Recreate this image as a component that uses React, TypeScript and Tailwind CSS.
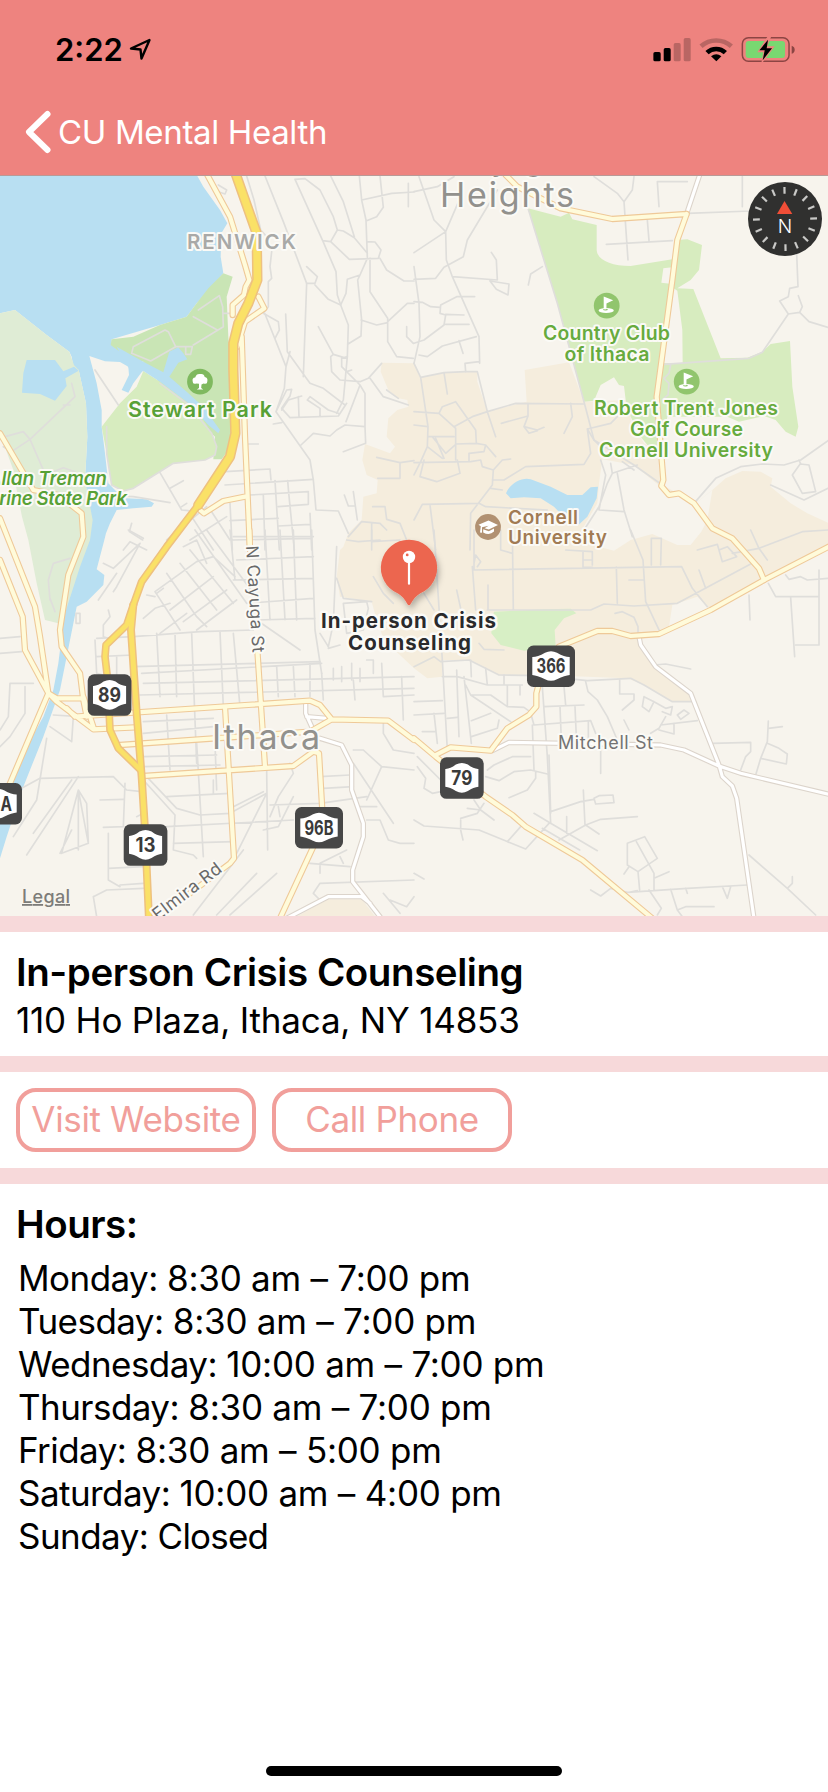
import React from "react";

type Tile = "nw" | "ne" | "sw" | "se";

const TILE_ORIGIN: Record<Tile, string> = {
  nw: "translate(0 170) scale(.33333)",
  ne: "translate(414 170) scale(.33333)",
  sw: "translate(0 530) scale(.33333)",
  se: "translate(414 530) scale(.33333)",
};

const LAND = "#f7f4ed";
const WATER = "#b8dff2";
const CAMPUS = "#f5eddd";
const GOLF = "#d7ecbf";
const PARK = "#c9e5b5";

const areas: [Tile, string, string][] = [
  ["nw", WATER, "M0 0H582L610 50 660 120 682 160 664 190 662 260 670 310 590 400 560 440 480 465 335 508 335 525 380 560 430 600 400 640 385 668 365 660 387 615 385 590 360 576 315 574 268 558 290 640 305 720 305 770 315 850 325 940 350 965 380 985 440 988 462 1000 455 1010 400 1015 350 1020 330 1060 318 1090 313 1110 290 1198 313 1215 310 1245 260 1295 230 1310 200 1460 180 1560 130 1700 70 1850 20 2000 0 2065V1930L30 1820 130 1640 160 1560 175 1480 195 1320 240 1160 262 1120 275 1050 265 1000 255 930 262 800 258 700 236 600 220 590 215 560 208 545 140 495 45 420 0 430Z"],
  ["nw", "#dfecd5", "M0 430L45 420 140 495 208 545 222 585 236 600 258 700 262 800 255 930 278 1050 270 1110 240 1190 195 1330 175 1360 135 1350 110 1240 85 1110 66 1040 50 960 40 900 0 790Z"],
  ["nw", WATER, "M80 570H165L190 604 222 590 236 602 196 625 200 648 165 692 120 672 66 668 70 610Z"],
  ["nw", PARK, "M670 310L698 320 680 380 685 500 690 560 700 820 665 868 640 868 645 800 480 640 430 575 380 560 332 525 335 508 400 500 480 465 560 440 590 400 625 355Z"],
  ["nw", GOLF, "M430 603L480 635 560 695 610 750 635 790 650 830 645 855 615 870 520 880 400 955 370 963 335 945 320 850 305 770 360 700 410 650Z"],
  ["nw", WATER, "M350 530L430 575 490 607 508 545 535 532 550 550 562 568 535 578 508 620 560 665 610 710 660 780 655 790 625 765 560 695 480 635 430 603 400 615 365 560Z"],
  ["ne", CAMPUS, "M0 580L20 622 90 608 190 605 190 635 220 725 310 702 338 695 332 600 465 577 510 695 635 690 655 760 690 820 735 850 745 945 845 1000 895 960 935 925 985 903 1040 905 1075 925 1070 950 1130 1000 1180 1030 1242 1058V1130L1050 1230 890 1320 850 1280 775 1305 765 1370 735 1390 675 1410 725 1490 830 1570 845 1592 775 1595 690 1545 640 1525 380 1515 255 1515 165 1470 85 1470 85 1520 40 1525 0 1495-90 1410-112 1350-127 1295-222 1280-232 1220-222 1140-212 1130-197 1090-157 1050-152 980-112 970-109 930-142 915-155 870-147 822-72 850-57 830-82 800-77 745-50 720-17 710-20 690-47 685-77 660-100 605-97 578Z"],
  ["ne", LAND, "M565 868L660 885 740 950 845 1000 895 960 880 1050 862 1085 830 1125 790 1125 715 1092 650 1110 600 1142 555 1130 500 1085 550 1000 555 940Z"],
  ["sw", LAND, "M1025 205L1110 212 1130 290 1110 320 1030 310Z"],
  ["sw", CAMPUS, "M880 1165L985 1108 1085 1108 1130 1165Z"],
  ["se", "#d7efc5", "M240 245L390 238 470 236 487 250 450 265 422 300 425 350 330 362 260 345 232 310 235 270Z"],
  ["ne", WATER, "M276 970C290 935 330 920 350 928L410 950 460 975 505 975 530 952 552 950 548 985 520 1040 490 1068 450 1042 420 1010 380 985 330 982 290 985Z"],
  ["ne", GOLF, "M342 115L440 140 465 128 475 148 548 165V240C550 270 590 288 650 288L775 268 790 210 820 208 864 225 855 300 830 330 790 355 838 357 920 565 1000 563 1045 545 1070 522 1128 513 1135 650 1153 770 1145 800 1115 785 1085 750 1050 738 975 755 940 740 760 740 740 850 700 825 680 800 650 740 635 690 630 648 615 645 600 622 560 645 540 692 510 695 430 400Z"],
  ["ne", LAND, "M748 295L775 292 775 342 742 338ZM790 362L805 480 806 580 750 580 772 350Z"],
];

const streets: [Tile, string][] = [
  ["nw", "M740 18L762 90 782 180 800 200M815 245L810 290 815 325 805 335 805 410 790 430M790 430L835 455 838 480 825 505M795 18L850 155 920 340M885 28L915 26 960 60 1000 140 1012 180M885 28L968 212 1008 305 1012 375 1022 405M992 18L1030 95 1063 200M1078 18L1085 90 1098 150 1102 262M1085 90L1175 70 1242 66M1140 18L1150 112 1130 140 1098 153M1102 215L1125 216 1143 240 1135 265 1048 268 992 215 968 212M992 215L1012 180 1030 183 1063 203 1102 250M1140 265L1160 300 1212 333H1242M1102 265L1080 315 1042 328 1038 370 1022 405 1045 465 1042 560 1030 690 1010 730M1080 315L1073 330 1085 450 1083 498 1043 523M1110 265V365L1163 445V515L1190 560 1240 565M1242 400L1222 400 1163 455M1083 450L1130 465 1163 458"],
  ["nw", "M920 340L910 620M920 340H945L952 320 920 290M945 345L985 388 1022 405M857 432L862 545 910 612 930 640 970 655 1035 705M795 432L858 590 853 655 828 725M870 545L858 590M955 470L1000 553 992 560 995 605 1020 630 1080 635 1105 625 1145 580M1000 553L1040 565M1042 560L1025 565 1025 590 1040 605 1055 600M1080 645L1040 605M1080 645L1095 670V770L1035 765 1010 780 990 798 940 790 903 825M1080 645L1038 755M1095 770L1097 820 1030 845M828 725L930 870 940 930 948 1020 1015 1023 1045 1090M828 725L860 660 875 658 870 678 845 715 870 743 1015 738 1040 700M895 680L897 740M845 720L865 690 905 678M922 690L930 680 985 720 1015 730M922 690L960 715V740M820 762L845 758M738 822H775M1110 625L1150 680 1225 705M1160 660L1195 685M1225 40V110M1130 862L1200 878 1242 872M1200 878V925H1133M1220 470V500L1240 520"],
  ["nw", "M675 905L810 897 813 930M675 945L940 928M750 975L925 965M825 932L838 1140M863 932L866 968 883 1140M690 1052L785 1047 835 1045M790 975L795 1140M835 1010L925 1003V968M835 1068L930 1063M930 1030L935 1140M690 1000L697 1140M698 1110L935 1105M480 908L545 1020 565 1022M510 955L550 932M630 1018L690 1110M575 1040L640 1140M545 1010L560 1000M500 1110L620 1010M570 1110L680 1040M395 1060L388 1085 428 1110M350 978L400 980 510 998M370 1140L390 1115 440 1140M1033 975L1045 1008H1065M1060 965L1072 1050M1045 1100L1085 1055 1140 1060 1160 1080M1118 1010H1155L1160 1048 1200 1060 1220 1110M1115 1140V1060"],
  ["nw", "M595 420L658 377 668 410 670 470 580 525M580 440L652 480M670 430H690M400 530L495 480 505 485 527 530 452 573 395 550ZM527 530H577L572 553H557V530M285 600L355 705M320 770V850L335 945 370 963 400 955 520 880 615 870 645 855 650 830 635 790 560 700 480 640M215 640L225 680 90 808 130 900M90 808L35 845 10 830M15 800L70 785 90 808M190 705H210M160 905L190 893 225 905M655 45L680 60 675 72 655 65"],
  ["ne", "M15 20L60 150 95 185 140 80M0 65L70 50 120 20M0 248L95 185 97 270 115 320 195 500 197 580M0 290L15 400 18 500 0 580M0 328L65 325 90 292 148 260 160 210 250 60M115 320L250 330M232 247L247 270 250 330M228 333L285 342 282 375 247 358ZM385 290L350 312 343 345M182 380L128 380 80 405 78 430 95 435 90 465 30 510 0 520M0 395L25 397 50 410 78 412M95 433L150 435M95 463H165M15 555L40 560 85 528 187 500M135 512L147 550M195 575L153 580 155 605M342 115L430 400 510 695 540 810 560 830"],
  ["ne", "M540 20L610 70 630 95M660 20L655 60 630 95 642 270M735 110L730 35H820M700 150L705 212M577 223L775 212M820 130L1010 123M985 20V110M1010 123L1100 112M1148 250L1152 350 1127 355 1123 380 1097 393 1123 432 1157 427 1165 410 1153 377M1157 427L1185 455 1242 472M1123 432L1045 547 1005 565 750 583M770 585L765 610 750 625 765 640 762 675 745 690M840 1000L905 925 980 890 1045 882 1110 885 1160 870 1242 812M1155 870L1160 882 1185 885 1205 965 1165 970 1135 915 1160 880M1070 945L1170 990 1242 955M1100 112L1148 115 1150 250"],
  ["ne", "M0 580L20 622 90 608 155 605 190 605 220 725 245 800M220 725L305 700 510 702M20 622L42 770 40 830 20 875 0 915M42 770L0 765M90 608L100 672M0 725L75 730 85 710 125 695 185 780 187 820 215 825 245 860M75 730L125 775 125 870M120 770L175 740 220 725M42 800H120M40 830L85 865M55 800L95 850 127 822 187 820M65 805L90 865M0 878L170 875 200 870 205 890 238 900 235 945 170 1030 168 1140M30 870L18 920 68 935 138 910 130 870M165 875V850L210 845 215 825M238 900L265 870 290 867M262 760L342 738V700M342 738L330 770 370 780 390 772M330 770L345 790 370 782M470 700L475 740 450 790M610 740L590 760 520 777 530 850 510 883 335 890 270 930 235 930M0 1050L25 1003 195 1000 215 1010 400 1020M48 1005L65 1140M230 955L265 960M520 777L540 810 660 885 745 945M560 870L575 915 555 1020 630 1025M590 880L595 910 580 940 555 1010 510 1080M595 910L670 885M610 910L630 1020 655 1100M625 875L660 900"],
  ["se", "M180 0V120M175 110L185 240M260 0V60L295 70M295 0L298 240M180 120L803 110 835 175 880 230M455 60L535 65V105M507 65V112H535M507 90H535M650 0L687 90 695 215 740 310M645 150H690M607 112L610 220M220 240H530L570 222 660 228 790 220 1010 102M712 105V25H742L740 105M603 250L625 245 660 262 672 290V320M0 410L60 380 80 395 165 390 255 435 375 437 520 452 650 445 690 465 775 515 845 515M128 180L140 235M222 240V165M195 340L210 358 270 360M60 0L85 390M850 60L910 43 925 95 968 80 940 50 915 60M955 70L1035 55 1165 5 1242 0M1035 55L1010 0M1035 55L1060 90M855 120L875 175M30 190L60 240M180 100L185 75 200 95 190 110"],
  ["se", "M85 390L100 660M85 440L130 440 220 465 325 465M128 420L135 620M215 415L220 465M170 390L172 440M150 440L172 640M155 465L170 495 290 575M170 495H230L280 530 330 532 355 550M280 465V530M318 465V495M0 515L85 512M0 555L90 550M60 550L70 640M25 605H65M100 565L130 562M172 572L230 550M172 620L250 595 255 570M385 470L400 680 410 880M450 470L455 525M390 530L510 525M438 530L442 630M483 530L487 620M350 550L360 585 530 572 545 610M523 575V635M515 455L522 485 550 510 580 560 610 630M355 585L360 720M617 450V492H660V510L625 540M630 570L645 600M690 500L720 515 705 545 685 530 690 500M720 515L755 535 775 530 770 555 745 545M790 555L810 540 825 550 800 568ZM755 560L735 595 710 610M740 585L850 572M735 600L780 612 780 580M270 435V465"],
  ["se", "M10 680L80 750M10 710L35 745 30 775 55 790 80 785M215 740L255 752 300 725 350 720 400 732M220 720L240 705 295 680H350M365 725L365 745 340 780 285 803M405 675L410 850M410 845L500 815 540 808M508 780L513 885M540 805L555 797 597 795 600 818 545 822ZM360 850L410 880 550 962M385 895L497 960M435 930L515 885 560 868 670 860M458 860V910M515 885L555 912M405 880L335 957 195 900 30 888 0 870M335 957L280 935 320 890M140 870V900L147 930M140 865L190 850 210 820M160 835L200 840 240 870M180 810L200 840M560 655V730M640 940L692 920 730 985 672 1025 640 1005ZM667 935L720 1030V1080M720 1045L765 1025M672 1025L677 1080M645 1010L630 1032M530 1080L560 1098 590 1075 640 1087 820 1075 1000 1065M705 1080L742 1135 730 1155M770 1078L790 1140 815 1130H900M790 1140L805 1160M925 1070L940 1105 950 1070M1005 975L1120 1075 1205 1155M1120 1075L1135 1060V1040M0 1030L30 1047M815 1075L820 1090M645 1087L670 1082"],
  ["se", "M1063 160L1085 200H1215M1130 203L1142 380M1215 120L1215 345H1145M1005 195L1008 270M1115 135L1125 148 1160 140 1180 150 1242 145M720 405L755 402 830 417M895 640L1010 637V665L995 680 980 720M1063 573L1060 635 1040 685 1025 735M1063 595L1105 590M1060 640L1095 655 1120 672 1117 702 1040 685"],
  ["sw", "M550 50L590 30 620 100M465 185L590 95 640 80 705 140M465 185L540 300M500 130L590 260 620 290M540 100L650 240M570 60L700 220M585 0L740 220M620 0L760 190M470 190L490 175M510 240L640 140M550 275L680 180M590 300L710 210M480 310L560 250M430 265L465 235 510 220M440 195L465 200M690 0L705 150M700 20L940 20M710 90L940 80M700 150L940 145M795 0L810 270M840 0L855 270M880 0L890 270M935 0L945 300 965 430M740 220L940 205M770 270L945 265M770 270L900 360M310 100L340 115 420 40M385 0L430 25M420 40L350 170 340 185M295 210L350 130M325 240L330 260 310 285V320L325 325"],
  ["sw", "M290 325L400 320 600 305 760 300M290 380L400 375M400 410L770 400 960 395M470 310L480 500M525 310L530 500M575 310L590 700M660 305L670 530M425 430L965 400M430 460L1242 440M420 495L1242 475M350 380V440M700 310L720 530M830 410L835 500M880 410L885 500M930 400V500M285 330L290 430 325 440M0 325L60 320M0 370L65 365M30 460H100M30 460L25 560 0 600M75 470V550L30 620 0 650M140 625L110 810 40 920M160 555L240 560M150 590L215 635 220 560M500 555L510 720M430 575L640 565M430 680L650 675M430 710L660 705M590 640L610 980M645 640L650 780M430 610L640 590"],
  ["sw", "M0 810L120 745 340 740 380 780 425 785M235 740L80 975M215 750L100 910M235 780L185 970 265 940 235 780 260 820 265 940M235 780V960M180 970L215 900M300 810L370 808M375 760L370 890 310 892M325 910V1050L360 1070M325 1015L430 1010M360 1065L430 1060M280 1100L320 1080 430 1075M280 1100L290 1160M430 750L525 855 520 960 580 975 590 985M440 740L530 835 600 855 690 850 800 790M500 890L880 870M520 940L700 935M500 800L690 790M430 850L410 860M640 790V750M700 830L790 785M705 980L800 790M800 720L803 960M790 900L835 890 880 800M580 1155L730 960M650 1155L770 1030M690 1155L830 1030M835 830L840 860M810 825L960 820 1100 800M870 700L880 730 835 800 810 860M960 740L1050 735M970 775L1060 770M1080 830L1130 830M1100 870H1140L1165 930 1200 940 1242 940M1040 960L960 1000 960 1030M1020 980L1030 1000M930 1000L1050 1010M940 1090L960 1060 1242 1050M940 1090L960 1110M1060 660H1090L1145 710 1242 720M1060 700L1180 880M1145 710L1100 810M1150 1090L1200 1150M1170 1110L1220 1130 1242 1100M960 310L985 350M985 355L1020 345M1000 415V450M1025 410V455M1055 400V450M1080 415V455M965 430L970 510M1100 390H1120V430M1145 400L1150 500 1242 495M1150 570V610L1180 660 1242 670M1205 440L1210 570M1060 450L1065 510"],
  ["sw", "M1040 30L1075 35 1140 30M1115 0V35L1200 30M1010 145L1030 205 1115 215M1030 220L1100 215 1105 235 1090 300 1040 310 1030 220M1120 140L1150 190 1180 220M1010 50L1000 280 985 350M150 210L145 150 160 100 210 85M150 205L165 245M228 250H240V280H228Z"],
];

const whiteRoads: [Tile, string][] = [
  ["ne", "M862 0L820 125"],
  ["se", "M675 320L680 345 725 410 830 490 915 705 925 740 955 768 968 805 1020 1165M235 662L285 637 740 645 810 660 915 708 980 730 1245 793"],
  ["sw", "M917 520V550L935 590M920 560L980 565M960 625L1025 645 1055 705V780L1090 880V920L1058 1020V1055L1140 1160M860 1165L985 1100H1085L1110 1120"],
];

const paleRoads: [Tile, string][] = [
  ["nw", "M622 15L690 140 735 285 748 330 737 350 732 375 698 405V435M775 380L793 415 735 455 712 530M725 500L735 800 750 1140M600 1020L612 1030 670 993 735 980M0 790L100 960 175 975 245 1030 250 1100 205 1215 180 1380 185 1430 240 1510 250 1590 260 1640M0 1045L105 1310 120 1400 145 1570M0 1170L68 1340 75 1440 145 1570"],
  ["ne", "M275 15L310 50 440 115 595 147 818 132M818 132L790 210 775 330 728 680 748 930 742 948 765 975 795 970 840 1000 895 1075 955 1105 1035 1195 1050 1230"],
  ["se", "M1250 47L1050 150 890 240 735 312 650 318 595 303H550L435 350M375 460L367 490V530L345 555 280 595 230 662 110 652 65 675M0 625L65 680 215 800 295 855 335 890 505 990 715 1165"],
  ["sw", "M145 490L170 505H250M145 490L30 760M145 490L170 515 280 598 405 592M200 535L225 560 400 548 930 512 960 525 995 568 1165 572 1242 630M995 568L930 605 360 645M430 738L880 708 940 665 957 670 968 860 940 950 840 1165M748 0L750 60M772 360L795 710M675 530L702 985 690 1000 470 1165M250 500L270 560 280 590"],
];

const highways: [Tile, string, number][] = [
  ["nw", "M703 0L770 190 772 330 745 400 715 460 700 520 700 600 706 790 690 860 595 1005", 22],
  ["nw", "M595 1005L500 1130 425 1235 400 1305", 14],
  ["sw", "M400 225L393 300 410 550 425 740 435 900 447 1170", 15],
  ["sw", "M400 225L380 285 318 345 315 380 322 440 330 600 355 655 422 720", 14],
];

interface LabelProps {
  x: number;
  y: number;
  w?: number;
  size: number;
  fill: string;
  weight?: number;
  italic?: boolean;
  halo?: number;
  rotate?: number;
  children: string;
}

function Label({ x, y, w, size, fill, weight = 600, italic, halo = 4, rotate, children }: LabelProps) {
  return (
    <text
      x={x}
      y={y}
      textLength={w}
      fontSize={size}
      fontWeight={weight}
      fontStyle={italic ? "italic" : undefined}
      fill={fill}
      stroke="#fbfaf6"
      strokeWidth={halo}
      strokeLinejoin="round"
      paintOrder="stroke"
      transform={rotate ? `rotate(${rotate} ${x} ${y})` : undefined}
    >
      {children}
    </text>
  );
}

function Shield({ x, y, w = 43.7, tw, children }: { x: number; y: number; w?: number; tw: number; children: string }) {
  const r = w - 5.3;
  const c = w / 2;
  return (
    <g transform={`translate(${x} ${y})`}>
      <rect width={w} height="41.5" rx="6.5" fill="#474747" />
      <path
        d={`M5.3 11.6Q10 11.8 ${c - 6} 7.3Q${c} 4.2 ${c + 6} 7.3Q${r - 4.7} 11.8 ${r} 11.6V29.5Q${r - 4.7} 30 ${c + 6} 33.7Q${c} 37 ${c - 6} 33.7Q10 30 5.3 29.5Z`}
        fill="#fff"
      />
      <text x={c - tw / 2} y="27.8" fontSize="19.5" fontWeight="700" fill="#3a3a3a" textLength={tw} lengthAdjust="spacingAndGlyphs">
        {children}
      </text>
    </g>
  );
}

function GolfIcon({ x, y }: { x: number; y: number }) {
  return (
    <g transform={`translate(${x} ${y})`}>
      <circle r="12.9" fill="#91c56d" />
      <ellipse cx="-.5" cy="4.8" rx="7.6" ry="2.5" fill="#fff" />
      <path d="M-3-9.3L6.5-5.5-.3-2.2V3.2H-3Z" fill="#fff" />
      <ellipse cx="-1.2" cy="3.9" rx="2.4" ry=".9" fill="#91c56d" />
      <path d="M-2.6-6V3.7H-.6V-6Z" fill="#fff" />
    </g>
  );
}

function Compass() {
  return (
    <g transform="translate(785 219)">
      <circle r="37" fill="#30302f" />
      {Array.from({ length: 16 }, (_, i) => (
        <path key={i} d="M0-32V-25.2" stroke="#c9c9c7" strokeWidth="2.2" transform={`rotate(${i * 22.5 - 1})`} />
      ))}
      <path d="M-.5-18L7.3-5H-8Z" fill="#f04e37" />
      <text x="0" y="14" textAnchor="middle" fontSize="19" fontWeight="300" fill="#fff">
        N
      </text>
    </g>
  );
}

function CityMap() {
  const thin = { fill: "none", strokeLinejoin: "round" as const, strokeLinecap: "round" as const };
  return (
    <svg viewBox="0 176 828 740" className="block h-[740px] w-[828px] font-['Inter',sans-serif]">
      <defs>
        <filter id="pinShadow" x="-50%" y="-50%" width="200%" height="200%">
          <feDropShadow dx="2" dy="4" stdDeviation="3" floodOpacity=".28" />
        </filter>
      </defs>
      <rect y="176" width="828" height="740" fill={LAND} />
      {areas.map(([t, fill, d], i) => (
        <path key={i} transform={TILE_ORIGIN[t]} d={d} fill={fill} />
      ))}
      {streets.map(([t, d], i) => (
        <path key={i} transform={TILE_ORIGIN[t]} d={d} {...thin} stroke="#dfdedb" strokeWidth="5" />
      ))}
      {whiteRoads.map(([t, d], i) => (
        <path key={i} transform={TILE_ORIGIN[t]} d={d} {...thin} stroke="#dcd4cb" strokeWidth="16" />
      ))}
      {whiteRoads.map(([t, d], i) => (
        <path key={i} transform={TILE_ORIGIN[t]} d={d} {...thin} stroke="#fff" strokeWidth="9.5" />
      ))}
      {paleRoads.map(([t, d], i) => (
        <path key={i} transform={TILE_ORIGIN[t]} d={d} {...thin} stroke="#efc998" strokeWidth="19" />
      ))}
      {paleRoads.map(([t, d], i) => (
        <path key={i} transform={TILE_ORIGIN[t]} d={d} {...thin} stroke="#fffbda" strokeWidth="12.5" />
      ))}
      {highways.map(([t, d, w], i) => (
        <path key={i} transform={TILE_ORIGIN[t]} d={d} {...thin} stroke="#eec17f" strokeWidth={w + 9} />
      ))}
      {highways.map(([t, d, w], i) => (
        <path key={i} transform={TILE_ORIGIN[t]} d={d} {...thin} stroke="#fae167" strokeWidth={w} />
      ))}

      <Label x={455} y={169.5} w={104} size={33} fill="#8f8f8b" weight={400}>Cayuga</Label>
      <Label x={440} y={207.3} w={134} size={34} fill="#92918d" weight={400}>Heights</Label>
      <Label x={187} y={249} w={109} size={20.5} fill="#a9a9a7" weight={600}>RENWICK</Label>
      <Label x={128} y={416.5} w={144} size={21.5} fill="#58a136">Stewart Park</Label>
      <Label x={-12} y={485} w={119} size={19} fill="#58a136" italic>Allan Treman</Label>
      <Label x={-29} y={504.5} w={156} size={19} fill="#58a136" italic>Marine State Park</Label>
      <Label x={543} y={340} w={127} size={19.5} fill="#67ab3e">Country Club</Label>
      <Label x={564.5} y={360.7} w={85} size={19.5} fill="#67ab3e">of Ithaca</Label>
      <Label x={594} y={415} w={184} size={19.5} fill="#67ab3e">Robert Trent Jones</Label>
      <Label x={630} y={436} w={113} size={19.5} fill="#67ab3e">Golf Course</Label>
      <Label x={599} y={457} w={174} size={19.5} fill="#67ab3e">Cornell University</Label>
      <Label x={508} y={524} w={70} size={19} fill="#a17b54">Cornell</Label>
      <Label x={508} y={544} w={99} size={19} fill="#a17b54">University</Label>
      <Label x={212} y={748.5} w={108} size={34} fill="#92918d" weight={400}>Ithaca</Label>
      <Label x={558} y={748.5} w={95} size={18} fill="#737373" weight={400}>Mitchell St</Label>
      <Label x={246} y={546} w={107} size={17} fill="#696969" weight={400} rotate={86.5}>N Cayuga St</Label>
      <Label x={158} y={921} w={82} size={17.5} fill="#696969" weight={400} rotate={-37.5}>Elmira Rd</Label>
      <text x="22" y="903" fontSize="18" fontWeight="500" fill="#7d7c79" textLength="48" textDecoration="underline">
        Legal
      </text>

      <g transform="translate(200 381.7)">
        <circle r="12.9" fill="#7fb95f" />
        <path d="M-1 2L-3.5 1.8Q-7.5 3-7.3-.3Q-8.2-4-4.8-4.3Q-3.5-8.3.3-7.6Q4-8.3 4.7-4.7Q8.2-4 7.3-.3Q7.5 3 3.5 1.8L1.5 2.7 1.2 6.3 3.2 7.8H-3.2L-1 6.4Z" fill="#fff" />
      </g>
      <GolfIcon x={606.7} y={305.7} />
      <GolfIcon x={686.7} y={381.7} />
      <g transform="translate(488 527)">
        <circle r="12.9" fill="#b19172" />
        <path d="M-9.5-2.2L.5-6.6 10-2 .8 2.6-3.5 1.2.6-1.3-6 .2V5.8L-8 5.5-7.2-.7Z" fill="#fff" />
        <path d="M-4.8 2.2L.8 4.2 6 1.5V4.6Q1.5 9-4.8 5.5Z" fill="#fff" />
      </g>

      <Shield x={87.7} y={674.3} tw={23}>89</Shield>
      <Shield x={123.7} y={824.3} tw={20}>13</Shield>
      <Shield x={295} y={807} w={48} tw={29}>96B</Shield>
      <Shield x={527} y={645.5} w={48} tw={29}>366</Shield>
      <Shield x={440} y={757.3} tw={21}>79</Shield>
      <Shield x={-26} y={783} w={48} tw={28}>13A</Shield>

      <Label x={321} y={627.7} w={175} size={20.5} fill="#2a2a2c" weight={650} halo={5}>In-person Crisis</Label>
      <Label x={348} y={650} w={123} size={20.5} fill="#2a2a2c" weight={650} halo={5}>Counseling</Label>

      <g transform="translate(409 567.7)">
        <path d="M0-28A28 28 0 0 1 11 25.8Q6 28.5 1.5 36.5Q0 38.5-1.5 36.5Q-6 28.5-11 25.8A28 28 0 0 1 0-28Z" fill="#ec6650" filter="url(#pinShadow)" />
        <circle cy="-10.7" r="6.2" fill="#fff" />
        <path d="M0-6V16" stroke="#fff" strokeWidth="2.2" strokeLinecap="round" />
        <circle cx="-1.8" cy="-12.8" r="1.4" fill="#ec6650" />
      </g>
      <Compass />
    </svg>
  );
}

function StatusIcons() {
  return (
    <svg viewBox="0 0 198 60" className="h-[60px] w-[198px]">
      <g transform="translate(.7 0) scale(.33333)">
        <rect x="68" y="96" width="22" height="28" rx="5" />
        <rect x="99" y="84" width="21" height="40" rx="5" />
        <rect x="129" y="69" width="21" height="55" rx="5" opacity=".22" />
        <rect x="159" y="54" width="21" height="70" rx="5" opacity=".22" />
        <path d="M211 79A68 68 0 0 1 302 79" fill="none" stroke="#000" strokeWidth="14" opacity=".22" />
        <path d="M229 98A40 40 0 0 1 284 98" fill="none" stroke="#000" strokeWidth="14" />
        <path d="M257 124L241 109Q257 97 272 109Z" />
        <rect x="335" y="53" width="140" height="71" rx="18" fill="none" stroke="#8c4543" strokeWidth="4.5" />
        <path d="M483 77Q492 80 492 89T483 101Z" fill="#8c4543" />
        <rect x="345" y="63" width="118" height="51" rx="9" fill="#79d871" />
        <path d="M414 44L380 97H398L391 134 432 79H409L424 44Z" fill="#ee837f" />
        <path d="M412 59L386 91H402L396 121 424 85H408Z" />
      </g>
    </svg>
  );
}

function NavHeader() {
  return (
    <header className="relative h-44 border-b border-[#b99a97] bg-[#ee837f]">
      <div className="flex h-[100px] items-center justify-between pl-[55px]">
        <div className="flex items-center pb-0.5">
          <span className="w-[70px] text-[31px] font-semibold leading-none">2:22</span>
          <svg viewBox="0 0 24 24" className="ml-[3px] h-[24px] w-[24px]" fill="none" stroke="#000" strokeWidth="2.4" strokeLinejoin="round">
            <path d="M21.5 3L3 11.5 12.5 12.5 13.5 21.5Z" />
          </svg>
        </div>
        <StatusIcons />
      </div>
      <div className="flex h-[64px] items-center pl-6 text-white">
        <svg viewBox="0 0 30 46" className="h-[46px] w-[30px]" fill="none" stroke="#fff" strokeWidth="6" strokeLinecap="round" strokeLinejoin="round">
          <path d="M23.5 5L5 23 23.5 41" />
        </svg>
        <span className="ml-1 text-[33px] leading-none tracking-[-0.35px]">CU Mental Health</span>
      </div>
    </header>
  );
}

const hours: [string, string][] = [
  ["Monday", "8:30 am – 7:00 pm"],
  ["Tuesday", "8:30 am – 7:00 pm"],
  ["Wednesday", "10:00 am – 7:00 pm"],
  ["Thursday", "8:30 am – 7:00 pm"],
  ["Friday", "8:30 am – 5:00 pm"],
  ["Saturday", "10:00 am – 4:00 pm"],
  ["Sunday", "Closed"],
];

function ActionButton({ children }: { children: React.ReactNode }) {
  return (
    <button className="flex h-16 w-60 items-center justify-center whitespace-nowrap rounded-[20px] border-4 border-[#f19f9b] pb-0.5 text-[35px] leading-none tracking-[-0.35px] text-[#f19f9b]">
      {children}
    </button>
  );
}

const Divider = () => <div className="h-4 bg-[#f7d9da]" />;

export default function App() {
  return (
    <div className="flex h-[1792px] w-[828px] flex-col overflow-hidden bg-white font-['Inter',sans-serif] text-black">
      <NavHeader />
      <CityMap />
      <Divider />
      <section className="h-[124px] whitespace-nowrap pl-4 pt-4">
        <h1 className="text-[38.5px] font-semibold leading-[48px] tracking-[-0.43px]">In-person Crisis Counseling</h1>
        <p className="text-[35px] leading-[48px] tracking-[-0.2px]">110 Ho Plaza, Ithaca, NY 14853</p>
      </section>
      <Divider />
      <section className="flex h-24 gap-4 p-4">
        <ActionButton>Visit Website</ActionButton>
        <ActionButton>Call Phone</ActionButton>
      </section>
      <Divider />
      <section className="flex-1 whitespace-nowrap pl-4 pt-4">
        <h2 className="text-[38.5px] font-semibold leading-[48px] tracking-[-0.5px]">Hours:</h2>
        <ul className="pl-0.5 pt-[9px] text-[35px] leading-[43px] tracking-[-0.55px]">
          {hours.map(([day, time]) => (
            <li key={day}>
              {`${day}: `}
              <span className={time === "Closed" ? "tracking-[-0.8px]" : "tracking-[-0.25px]"}>{time}</span>
            </li>
          ))}
        </ul>
      </section>
      <div className="flex justify-center pb-4">
        <div className="h-2.5 w-[296px] rounded-full bg-black" />
      </div>
    </div>
  );
}
